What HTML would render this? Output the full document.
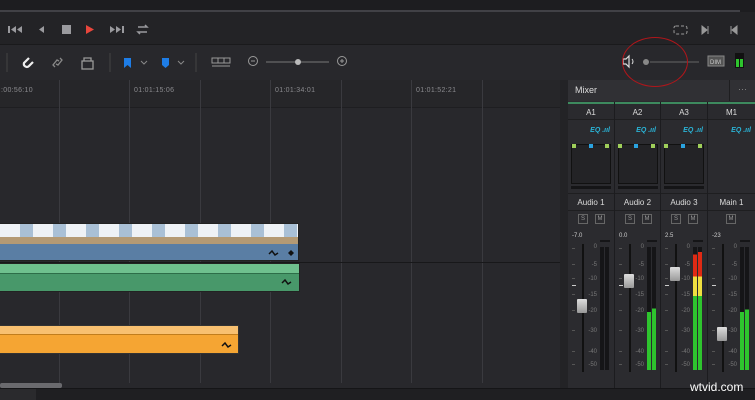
<!DOCTYPE html><html><head><style>
*{margin:0;padding:0;box-sizing:border-box}
body{width:755px;height:400px;background:#28282c;position:relative;overflow:hidden;font-family:"Liberation Sans",sans-serif;color:#cfcfcf}
.a{position:absolute}
.vl{position:absolute;top:80px;width:1px;height:303px;background:#3a3a3f}
.tc{position:absolute;top:87px;font-size:7px;color:#8a8a8e;letter-spacing:.3px}
.col{position:absolute;top:102px;height:286px;border-right:1px solid #1c1c1f;overflow:hidden}
.hd{position:absolute;left:0;right:0;top:0;height:18px;font-size:8px;text-align:center;line-height:18px;color:#ddd;background:#2a2a2e;border-bottom:1px solid #1e1e20;border-top:2px solid #3d8a5e}
.eq{position:absolute;left:0;right:4px;top:19px;height:20px;font-size:7px;text-align:right;line-height:20px;color:#2ab3d6;font-style:italic;font-weight:bold}
.pan{position:absolute;left:3px;top:42px;width:40px;height:40px;border:1px solid #111;background:#232326}
.pb{position:absolute;left:3px;top:84px;width:40px;height:3px;background:#151517}
.nm{position:absolute;left:0;right:0;top:91px;height:18px;font-size:8px;text-align:center;line-height:18px;color:#ddd;border-top:1px solid #1e1e20;border-bottom:1px solid #1e1e20}
.sm{position:absolute;top:112px;width:10px;height:10px;border:1px solid #666;font-size:6px;line-height:8px;text-align:center;color:#999}
.val{position:absolute;left:4px;top:131px;font-size:6px;color:#ccc}
.trk{position:absolute;left:14px;top:142px;width:2px;height:128px;background:#111}
.knob{position:absolute;left:9px;width:10px;height:14px;background:linear-gradient(#ddd,#999);border-radius:1px}
.sc{position:absolute;left:0;top:0}
.mt{position:absolute;top:145px;width:4px;height:123px;background:#151517}
.cap{position:absolute;top:138px;left:32px;width:10px;height:2px;background:#151517}
</style></head><body>
<div class="a" style="left:0;top:0;width:755px;height:12px;background:#1d1d20"></div>
<div class="a" style="left:0;top:10px;width:740px;height:2px;background:#414146"></div>
<div class="a" style="left:0;top:12px;width:755px;height:32px;background:#232326"></div>
<div class="a" style="left:0;top:44px;width:755px;height:1px;background:#1a1a1c"></div>
<div class="a" style="left:0;top:45px;width:755px;height:35px;background:#28282c"></div>
<svg class="a" style="left:0;top:12px" width="755" height="32">
<g fill="#9a9a9e"><rect x="8" y="14" width="2" height="7"/><path d="M16 14v7l-5-3.5zM22 14v7l-5-3.5z"/>
<path d="M44 14v7l-5-3.5z"/><rect x="62" y="13" width="9" height="9"/>
<path d="M110 14v7l5-3.5zM116 14v7l5-3.5z"/><rect x="122" y="14" width="2" height="7"/></g>
<path d="M86 13v9l8-4.5z" fill="#e8463c"/>
<path d="M138 15h9l-2-2M147 20h-9l2 2" stroke="#9a9a9e" stroke-width="1.5" fill="none"/>
<rect x="674" y="14" width="13" height="8" rx="2" fill="none" stroke="#999" stroke-dasharray="3 2"/>
<path d="M702 14v8l5-4zM708 14v8" stroke="#999" fill="#999"/>
<path d="M731 14v8M737 14v8l-5-4z" stroke="#999" fill="#999"/>
</svg>
<svg class="a" style="left:0;top:45px" width="755" height="35">
<g stroke="#444"><line x1="7" y1="8" x2="7" y2="27"/><line x1="110" y1="8" x2="110" y2="27"/><line x1="196" y1="8" x2="196" y2="27"/></g>
<path d="M29 13l-5 5a3 3 0 0 0 5 3l4-4" stroke="#eee" stroke-width="2.2" fill="none"/>
<path d="M55 22l-2-2 4-5 2 1M60 13l2 2-4 5-2-1" stroke="#888" stroke-width="1.3" fill="none"/>
<rect x="82" y="16" width="11" height="8" fill="none" stroke="#999" stroke-width="1.3"/><path d="M84 16v-3h7v3" stroke="#999" fill="none" stroke-width="1.3"/>
<path d="M124 13h7v10l-3.5-3-3.5 3z" fill="#1e7de6"/><path d="M141 16l3 3 3-3" stroke="#888" fill="none"/>
<path d="M162 13h7v7l-3.5 3-3.5-3z" fill="#1e7de6"/><path d="M178 16l3 3 3-3" stroke="#888" fill="none"/>
<g stroke="#999" fill="none"><rect x="212" y="13" width="18" height="5"/><line x1="218" y1="13" x2="218" y2="18"/><line x1="224" y1="13" x2="224" y2="18"/><line x1="212" y1="21" x2="230" y2="21"/>
<circle cx="253" cy="16" r="4.5"/><line x1="251" y1="16" x2="255" y2="16"/>
<circle cx="342" cy="16" r="4.5"/><line x1="340" y1="16" x2="344" y2="16"/><line x1="342" y1="14" x2="342" y2="18"/></g>
<line x1="266" y1="17" x2="329" y2="17" stroke="#777"/><circle cx="298" cy="17" r="3" fill="#bbb"/>
<path d="M623 14h3l3-3v11l-3-3h-3z" fill="none" stroke="#ddd" stroke-width="1.2"/><path d="M632 14q2 2.5 0 5" stroke="#ddd" fill="none"/>
<circle cx="646" cy="17" r="3" fill="#888"/><line x1="650" y1="17" x2="699" y2="17" stroke="#666"/>
<rect x="708" y="11" width="16" height="10" fill="#555" stroke="#888"/><text x="710" y="19" font-size="6" fill="#ccc" font-family="Liberation Sans">DIM</text>
<rect x="735" y="8" width="9" height="15" fill="#111"/><rect x="736" y="14" width="3" height="8" fill="#2ec42e"/><rect x="740" y="14" width="3" height="8" fill="#2ec42e"/>
</svg>
<div class="a" style="left:0;top:80px;width:560px;height:28px;background:#262629;border-bottom:1px solid #1e1e21"></div>
<div class="vl" style="left:59px"></div><div class="vl" style="left:129px"></div><div class="vl" style="left:200px"></div><div class="vl" style="left:270px"></div><div class="vl" style="left:341px"></div><div class="vl" style="left:411px"></div><div class="vl" style="left:482px"></div>
<div class="tc" style="left:1px">:00:56:10</div><div class="tc" style="left:134px">01:01:15:06</div><div class="tc" style="left:275px">01:01:34:01</div><div class="tc" style="left:416px">01:01:52:21</div>
<div class="a" style="left:0;top:262px;width:560px;height:1px;background:#18181a"></div>
<div class="a" style="left:0;top:223px;width:299px;height:38px;background:#5a7ea4;border:1px solid #222;border-left:none"></div>
<div class="a" style="left:0;top:224px;width:298px;height:20px;background:repeating-linear-gradient(90deg,#eef2f6 0 20px,#a9c0d6 20px 33px);"></div>
<div class="a" style="left:0;top:237px;width:298px;height:7px;background:#b49a74"></div>
<div class="a" style="left:0;top:263px;width:300px;height:29px;background:#48986a;border:1px solid #222;border-left:none"></div>
<div class="a" style="left:0;top:264px;width:299px;height:10px;background:#6fc08e;border-bottom:1px solid #2d6d48"></div>
<div class="a" style="left:0;top:325px;width:239px;height:29px;background:#f5a533;border:1px solid #333;border-left:none"></div>
<div class="a" style="left:0;top:326px;width:238px;height:9px;background:#f8c070;border-bottom:1px solid #c17d1c"></div>
<svg class="a" style="left:0;top:0" width="560" height="400"><g stroke="#111" stroke-width="1.5" fill="none"><path d="M269 254l3-3 3 4 3-2"/><path d="M282 283l3-3 3 4 3-2"/><path d="M222 346l3-3 3 4 3-2"/></g><path d="M291 250l3 3-3 3-3-3z" fill="#111"/></svg>
<div class="a" style="left:0;top:383px;width:62px;height:5px;background:#6a6a6e;border-radius:2px"></div>
<div class="a" style="left:560px;top:80px;width:8px;height:308px;background:#232326"></div>
<div class="a" style="left:0;top:388px;width:755px;height:12px;background:#1f1f22;border-top:1px solid #151517"></div>
<div class="a" style="left:0;top:389px;width:36px;height:11px;background:#2a2a2d"></div>
<div class="a" style="left:568px;top:80px;width:187px;height:308px;background:#2b2b2f"></div>
<div class="a" style="left:568px;top:80px;width:187px;height:21px;background:#303034;font-size:9px;line-height:21px;padding-left:7px;color:#ddd">Mixer</div>
<div class="a" style="left:729px;top:80px;width:26px;height:21px;border-left:1px solid #1e1e20;color:#888;font-size:9px;text-align:center;line-height:18px">···</div>

<div class="col" style="left:568px;width:47px"><div class="hd">A1</div><div class="eq">EQ .ııl</div><div class="pan"></div><div class="pb"></div><div class="nm">Audio 1</div><div class="sm" style="left:10px">S</div><div class="sm" style="left:27px">M</div><div class="val">-7.0</div><div class="trk"></div><div class="knob" style="top:197px"></div><svg class="sc" width="47" height="286"><use href="#scl"/></svg><div class="cap"></div><div class="mt" style="left:32px"></div><div class="mt" style="left:37px"></div></div>
<div class="col" style="left:615px;width:46px"><div class="hd">A2</div><div class="eq">EQ .ııl</div><div class="pan"></div><div class="pb"></div><div class="nm">Audio 2</div><div class="sm" style="left:10px">S</div><div class="sm" style="left:27px">M</div><div class="val">0.0</div><div class="trk"></div><div class="knob" style="top:172px"></div><svg class="sc" width="47" height="286"><use href="#scl"/></svg><div class="cap"></div><div class="mt" style="left:32px;background:linear-gradient(#151517 0 53%,#2ec42e 53%)"></div><div class="mt" style="left:37px;background:linear-gradient(#151517 0 50%,#2ec42e 50%)"></div></div>
<div class="col" style="left:661px;width:47px"><div class="hd">A3</div><div class="eq">EQ .ııl</div><div class="pan"></div><div class="pb"></div><div class="nm">Audio 3</div><div class="sm" style="left:10px">S</div><div class="sm" style="left:27px">M</div><div class="val">2.5</div><div class="trk"></div><div class="knob" style="top:165px"></div><svg class="sc" width="47" height="286"><use href="#scl"/></svg><div class="cap"></div><div class="mt" style="left:32px;background:linear-gradient(#151517 0 6%,#e02a14 6% 24%,#f0e040 24% 40%,#2ec42e 40%)"></div><div class="mt" style="left:37px;background:linear-gradient(#151517 0 4%,#e02a14 4% 24%,#f0e040 24% 40%,#2ec42e 40%)"></div></div>
<div class="col" style="left:708px;width:47px;border-right:none"><div class="hd">M1</div><div class="eq">EQ .ııl</div><div class="nm">Main 1</div><div class="sm" style="left:18px">M</div><div class="val">-23</div><div class="trk"></div><div class="knob" style="top:225px"></div><svg class="sc" width="47" height="286"><use href="#scl"/></svg><div class="cap"></div><div class="mt" style="left:32px;background:linear-gradient(#151517 0 53%,#2ec42e 53%)"></div><div class="mt" style="left:37px;background:linear-gradient(#151517 0 51%,#2ec42e 51%)"></div></div>
<svg width="0" height="0" style="position:absolute"><defs><g id="scl" font-family="Liberation Sans" font-size="6" fill="#777" text-anchor="end"><text x="29" y="146">0</text><text x="29" y="164">-5</text><text x="29" y="178">-10</text><text x="29" y="194">-15</text><text x="29" y="210">-20</text><text x="29" y="230">-30</text><text x="29" y="251">-40</text><text x="29" y="264">-50</text><g fill="#555"><rect x="4" y="146" width="3" height="1"/><rect x="4" y="162" width="3" height="1"/><rect x="4" y="176" width="3" height="1"/><rect x="4" y="192" width="3" height="1"/><rect x="4" y="208" width="3" height="1"/><rect x="4" y="228" width="3" height="1"/><rect x="4" y="249" width="3" height="1"/><rect x="4" y="262" width="3" height="1"/></g><rect x="4" y="183" width="4" height="1" fill="#ccc"/></g></defs></svg>
<svg class="a" style="left:568px;top:140px" width="140" height="10"><g fill="#9fcf5a"><rect x="4" y="4" width="4" height="4"/><rect x="50" y="4" width="4" height="4"/><rect x="96" y="4" width="4" height="4"/><rect x="37" y="4" width="4" height="4"/><rect x="83" y="4" width="4" height="4"/><rect x="130" y="4" width="4" height="4"/></g><g fill="#2aa3e0"><rect x="21" y="4" width="4" height="4"/><rect x="66" y="4" width="4" height="4"/><rect x="113" y="4" width="4" height="4"/></g></svg>
<div class="a" style="left:622px;top:37px;width:66px;height:50px;border:1px solid #b0161b;border-radius:50%"></div>
<div class="a" style="left:690px;top:380px;font-size:12px;color:#fff">wtvid.com</div>
</body></html>
